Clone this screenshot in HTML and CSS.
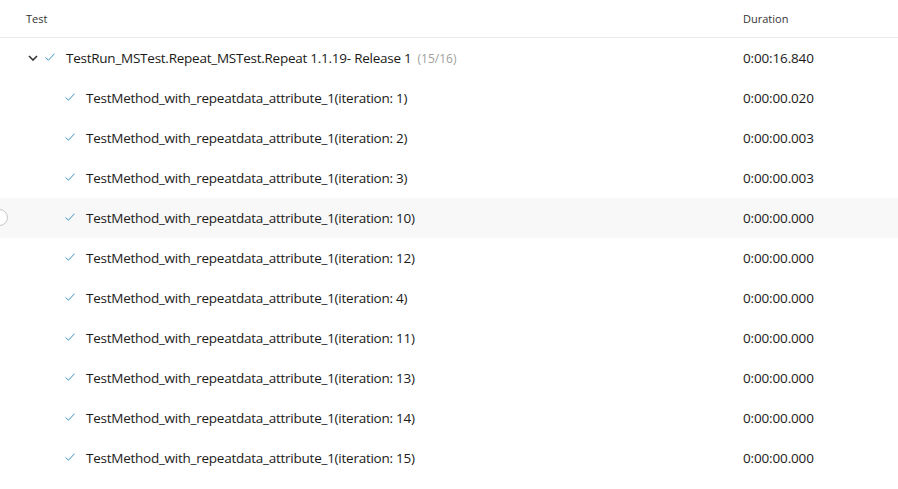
FILE: index.html
```html
<!DOCTYPE html>
<html>
<head>
<meta charset="utf-8">
<link rel="stylesheet" href="styles.css">
</head>
<body>
<div class="grid">
  <div class="row header">
    <div class="col-test">Test</div>
    <div class="col-dur">Duration</div>
  </div>
  <div class="row parent">
    <div class="col-test">
      <svg class="chev" width="10" height="6" viewBox="0 0 10 6"><path d="M1 1 L5 5 L9 1" fill="none" stroke="#333" stroke-width="1.6"/></svg>
      <svg class="check" width="10" height="8" viewBox="0 0 10 8"><path d="M0.5 4.5 L3.5 7.2 L9.5 0.7" fill="none" stroke="#3a93c4" stroke-width="1"/></svg>
      <span class="name">TestRun_MSTest.Repeat_MSTest.Repeat 1.1.19- Release 1</span><span class="count">(15/16)</span>
    </div>
    <div class="col-dur">0:00:16.840</div>
  </div>
  <div class="row child">
    <div class="col-test"><svg class="check" width="10" height="8" viewBox="0 0 10 8"><path d="M0.5 4.5 L3.5 7.2 L9.5 0.7" fill="none" stroke="#3a93c4" stroke-width="1"/></svg><span class="name">TestMethod_with_repeatdata_attribute_1(iteration: 1)</span></div>
    <div class="col-dur">0:00:00.020</div>
  </div>
  <div class="row child">
    <div class="col-test"><svg class="check" width="10" height="8" viewBox="0 0 10 8"><path d="M0.5 4.5 L3.5 7.2 L9.5 0.7" fill="none" stroke="#3a93c4" stroke-width="1"/></svg><span class="name">TestMethod_with_repeatdata_attribute_1(iteration: 2)</span></div>
    <div class="col-dur">0:00:00.003</div>
  </div>
  <div class="row child">
    <div class="col-test"><svg class="check" width="10" height="8" viewBox="0 0 10 8"><path d="M0.5 4.5 L3.5 7.2 L9.5 0.7" fill="none" stroke="#3a93c4" stroke-width="1"/></svg><span class="name">TestMethod_with_repeatdata_attribute_1(iteration: 3)</span></div>
    <div class="col-dur">0:00:00.003</div>
  </div>
  <div class="row child hover">
    <span class="radio"></span>
    <div class="col-test"><svg class="check" width="10" height="8" viewBox="0 0 10 8"><path d="M0.5 4.5 L3.5 7.2 L9.5 0.7" fill="none" stroke="#3a93c4" stroke-width="1"/></svg><span class="name">TestMethod_with_repeatdata_attribute_1(iteration: 10)</span></div>
    <div class="col-dur">0:00:00.000</div>
  </div>
  <div class="row child">
    <div class="col-test"><svg class="check" width="10" height="8" viewBox="0 0 10 8"><path d="M0.5 4.5 L3.5 7.2 L9.5 0.7" fill="none" stroke="#3a93c4" stroke-width="1"/></svg><span class="name">TestMethod_with_repeatdata_attribute_1(iteration: 12)</span></div>
    <div class="col-dur">0:00:00.000</div>
  </div>
  <div class="row child">
    <div class="col-test"><svg class="check" width="10" height="8" viewBox="0 0 10 8"><path d="M0.5 4.5 L3.5 7.2 L9.5 0.7" fill="none" stroke="#3a93c4" stroke-width="1"/></svg><span class="name">TestMethod_with_repeatdata_attribute_1(iteration: 4)</span></div>
    <div class="col-dur">0:00:00.000</div>
  </div>
  <div class="row child">
    <div class="col-test"><svg class="check" width="10" height="8" viewBox="0 0 10 8"><path d="M0.5 4.5 L3.5 7.2 L9.5 0.7" fill="none" stroke="#3a93c4" stroke-width="1"/></svg><span class="name">TestMethod_with_repeatdata_attribute_1(iteration: 11)</span></div>
    <div class="col-dur">0:00:00.000</div>
  </div>
  <div class="row child">
    <div class="col-test"><svg class="check" width="10" height="8" viewBox="0 0 10 8"><path d="M0.5 4.5 L3.5 7.2 L9.5 0.7" fill="none" stroke="#3a93c4" stroke-width="1"/></svg><span class="name">TestMethod_with_repeatdata_attribute_1(iteration: 13)</span></div>
    <div class="col-dur">0:00:00.000</div>
  </div>
  <div class="row child">
    <div class="col-test"><svg class="check" width="10" height="8" viewBox="0 0 10 8"><path d="M0.5 4.5 L3.5 7.2 L9.5 0.7" fill="none" stroke="#3a93c4" stroke-width="1"/></svg><span class="name">TestMethod_with_repeatdata_attribute_1(iteration: 14)</span></div>
    <div class="col-dur">0:00:00.000</div>
  </div>
  <div class="row child">
    <div class="col-test"><svg class="check" width="10" height="8" viewBox="0 0 10 8"><path d="M0.5 4.5 L3.5 7.2 L9.5 0.7" fill="none" stroke="#3a93c4" stroke-width="1"/></svg><span class="name">TestMethod_with_repeatdata_attribute_1(iteration: 15)</span></div>
    <div class="col-dur">0:00:00.000</div>
  </div>
</div>
</body>
</html>
```
FILE: styles.css
```css
*, *::before, *::after {
  box-sizing: border-box;
}
html, body {
  margin: 0;
  padding: 0;
  background: #fff;
}
body {
  font-family: "Open Sans", "Noto Sans", sans-serif;
  color: #1b1a19;
  width: 898px;
  height: 489px;
  overflow: hidden;
}
.grid {
  display: flex;
  flex-direction: column;
}
.row {
  position: relative;
  display: flex;
  align-items: center;
  height: 40px;
}
.header {
  height: 38px;
  border-bottom: 1px solid #eaeaea;
  font-size: 11px;
  color: #333;
}
.header .col-test {
  padding-left: 26px;
}
.col-test {
  flex: 0 0 743px;
  display: flex;
  align-items: center;
  white-space: nowrap;
}
.col-dur {
  flex: 1;
  font-size: 13.5px;
  letter-spacing: -0.15px;
}
.header .col-dur {
  font-size: 11px;
  letter-spacing: 0;
}
.parent .col-test {
  padding-left: 28px;
}
.chev {
  margin-right: 7px;
}
.check {
  margin-right: 11px;
  margin-top: -3px;
}
.child .col-test {
  padding-left: 65px;
}
.name {
  font-size: 13.5px;
  letter-spacing: -0.25px;
}
.count {
  font-size: 12px;
  color: #a19f9d;
  margin-left: 6px;
}
.hover {
  background: #f8f8f8;
}
.radio {
  position: absolute;
  left: -9px;
  top: 11px;
  width: 17px;
  height: 17px;
  border: 1px solid #c8c6c4;
  border-radius: 50%;
  background: #fff;
}
```
